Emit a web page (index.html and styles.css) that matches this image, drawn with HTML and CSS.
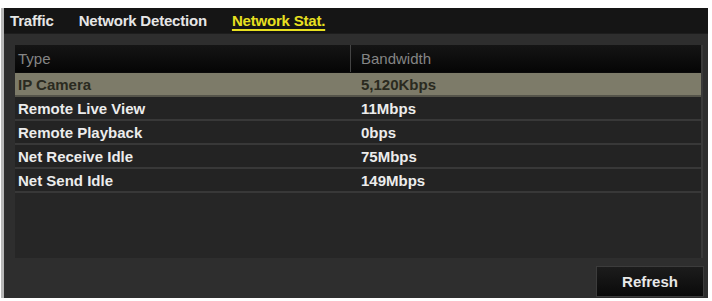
FILE: index.html
```html
<!DOCTYPE html>
<html>
<head>
<meta charset="utf-8">
<link rel="stylesheet" href="styles.css">
</head>
<body>
<div class="panel">
  <div class="tabs">
    <span class="tab">Traffic</span>
    <span class="tab">Network Detection</span>
    <span class="tab active">Network Stat.</span>
  </div>
  <div class="content">
    <div class="table">
      <div class="row head">
        <div class="c1">Type</div>
        <div class="c2">Bandwidth</div>
      </div>
      <div class="row sel">
        <div class="c1">IP Camera</div>
        <div class="c2">5,120Kbps</div>
      </div>
      <div class="row">
        <div class="c1">Remote Live View</div>
        <div class="c2">11Mbps</div>
      </div>
      <div class="row">
        <div class="c1">Remote Playback</div>
        <div class="c2">0bps</div>
      </div>
      <div class="row">
        <div class="c1">Net Receive Idle</div>
        <div class="c2">75Mbps</div>
      </div>
      <div class="row">
        <div class="c1">Net Send Idle</div>
        <div class="c2">149Mbps</div>
      </div>
    </div>
    <div class="footer">
      <button class="btn">Refresh</button>
    </div>
  </div>
</div>
</body>
</html>
```
FILE: styles.css
```css
html, body {
  margin: 0;
  padding: 0;
  background: #ffffff;
}
body {
  font-family: "Liberation Sans", Arial, sans-serif;
  font-weight: bold;
  font-size: 15px;
}
.panel {
  margin: 8px 4px 0 4px;
  width: 704px;
  height: 290px;
  background: #2b2b2b;
  display: flex;
  flex-direction: column;
  box-shadow: -3px 0 0 #b8b8b8;
}
.tabs {
  height: 25px;
  background: #151515;
  display: flex;
  align-items: center;
  padding-left: 6px;
  gap: 25px;
  border-bottom: 1px solid #1d1d1d;
}
.tab {
  color: #e6e6e6;
  letter-spacing: -0.2px;
}
.tab.active {
  color: #e8e020;
  text-decoration: underline;
  text-underline-offset: 3px;
  text-decoration-thickness: 2px;
}
.content {
  flex: 1;
  display: flex;
  flex-direction: column;
  padding: 11px 5px 1px 11px;
  background: #2e2e2e;
}
.table {
  height: 213px;
  background: #262626;
  display: flex;
  flex-direction: column;
  border-right: 2px solid #3a3a3a;
}
.row {
  display: flex;
  height: 22px;
  align-items: center;
  background: #232323;
  border-bottom: 2px solid #383838;
  color: #ececec;
}
.row.head {
  height: 27px;
  background: linear-gradient(#151515, #050505);
  color: #858585;
  font-weight: normal;
  border-bottom: 1px solid #0a0a0a;
}
.row.sel {
  background: #7d7b69;
  color: #2a2a20;
  border-bottom: 2px solid #55544a;
}
.c1 {
  width: 336px;
  padding-left: 3px;
  height: 100%;
  display: flex;
  align-items: center;
  box-sizing: border-box;
}
.head .c1 {
  border-right: 1px solid #444;
}
.c2 {
  padding-left: 10px;
}
.footer {
  flex: 1;
  display: flex;
  justify-content: flex-end;
  align-items: flex-end;
}
.btn {
  width: 108px;
  height: 31px;
  background: linear-gradient(#1c1c1c, #0a0a0a);
  border: 1px solid #3c3c3c;
  color: #e8e8e8;
  font-family: "Liberation Sans", Arial, sans-serif;
  font-weight: bold;
  font-size: 15px;
  padding: 0;
  margin-right: -1px;
}
```
